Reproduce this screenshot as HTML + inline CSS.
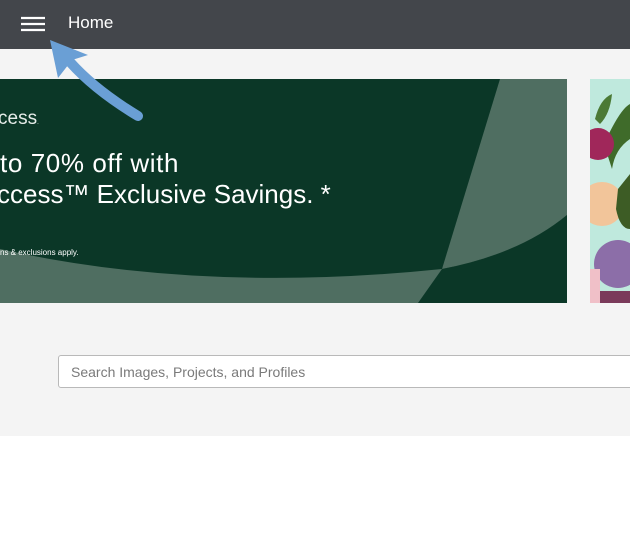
<!DOCTYPE html>
<html><head><meta charset="utf-8"><style>
html,body{margin:0;padding:0;width:630px;height:554px;overflow:hidden;background:#fff;font-family:"Liberation Sans",sans-serif;}
.hdr{position:absolute;left:0;top:0;width:630px;height:49px;background:#43464b;}
.hdr .t{position:absolute;left:68px;top:13px;color:#fff;font-size:17px;}
.gray{position:absolute;left:0;top:49px;width:630px;height:387px;background:#f4f4f4;}
.search{position:absolute;left:58px;top:355px;width:600px;height:33px;border:1px solid #b9b9b9;border-radius:3px;background:#fff;box-sizing:border-box;}
.search span{position:absolute;left:12px;top:8px;font-size:14px;color:#7a7a7a;}
</style></head><body>
<div class="hdr">
<svg style="position:absolute;left:20px;top:16px" width="26" height="16"><g stroke="#fff" stroke-width="2.2"><line x1="1" y1="2" x2="25" y2="2"/><line x1="1" y1="8" x2="25" y2="8"/><line x1="1" y1="14" x2="25" y2="14"/></g></svg>
<div class="t">Home</div>
</div>
<div class="gray"></div>
<svg style="position:absolute;left:0;top:79px" width="567" height="224" viewBox="0 0 567 224">
<rect width="567" height="224" fill="#0b3727"/>
<path d="M0 170 Q200 215 442 190 Q520 175 567 136 L567 224 L0 224Z" fill="#4f6e61"/>
<path d="M500 0 L567 0 L567 136 Q520 175 442 190 Z" fill="#4f6e61"/>
<path d="M442 190 L418 224 L567 224 L567 136 Q520 175 442 190Z" fill="#0b3727"/>
<text x="-2" y="45" fill="#e6ece9" font-family="Liberation Sans" font-size="19" font-weight="300">cess<tspan font-size="6">.</tspan></text>
<text x="0" y="93" fill="#fff" font-family="Liberation Sans" font-size="26" letter-spacing="0.6">to 70% off with</text>
<text x="-3" y="124" fill="#fff" font-family="Liberation Sans" font-size="26">ccess™ Exclusive Savings. *</text>
<text x="0" y="176" fill="#fff" font-family="Liberation Sans" font-size="8">ns &amp; exclusions apply.</text>
</svg>
<svg style="position:absolute;left:590px;top:79px" width="40" height="224">
<rect width="40" height="224" fill="#bfe9dd"/>
<path d="M14 65 Q30 30 40 25 L40 60 Q25 70 22 90Z" fill="#3f6b2a"/>
<path d="M5 40 Q10 20 22 15 Q20 35 10 45Z" fill="#4b7a35"/>
<circle cx="8" cy="65" r="16" fill="#a0275a"/>
<circle cx="12" cy="125" r="22" fill="#f2c59a"/>
<path d="M28 110 Q40 95 40 95 L40 150 Q30 150 26 130Z" fill="#3d5c25"/>
<circle cx="28" cy="185" r="24" fill="#8c6ea8"/>
<rect x="0" y="190" width="10" height="34" fill="#f0c0c8"/>
<rect x="10" y="212" width="30" height="12" fill="#7a3a5a"/>
</svg>
<svg style="position:absolute;left:0;top:0" width="160" height="130">
<path d="M138 116 Q95 90 70 62" stroke="#6a9fd5" stroke-width="10" fill="none" stroke-linecap="round"/>
<path d="M50 40 L88 55 L72 60 L58 78Z" fill="#6a9fd5"/>
</svg>
<div class="search"><span>Search Images, Projects, and Profiles</span></div>
</body></html>
